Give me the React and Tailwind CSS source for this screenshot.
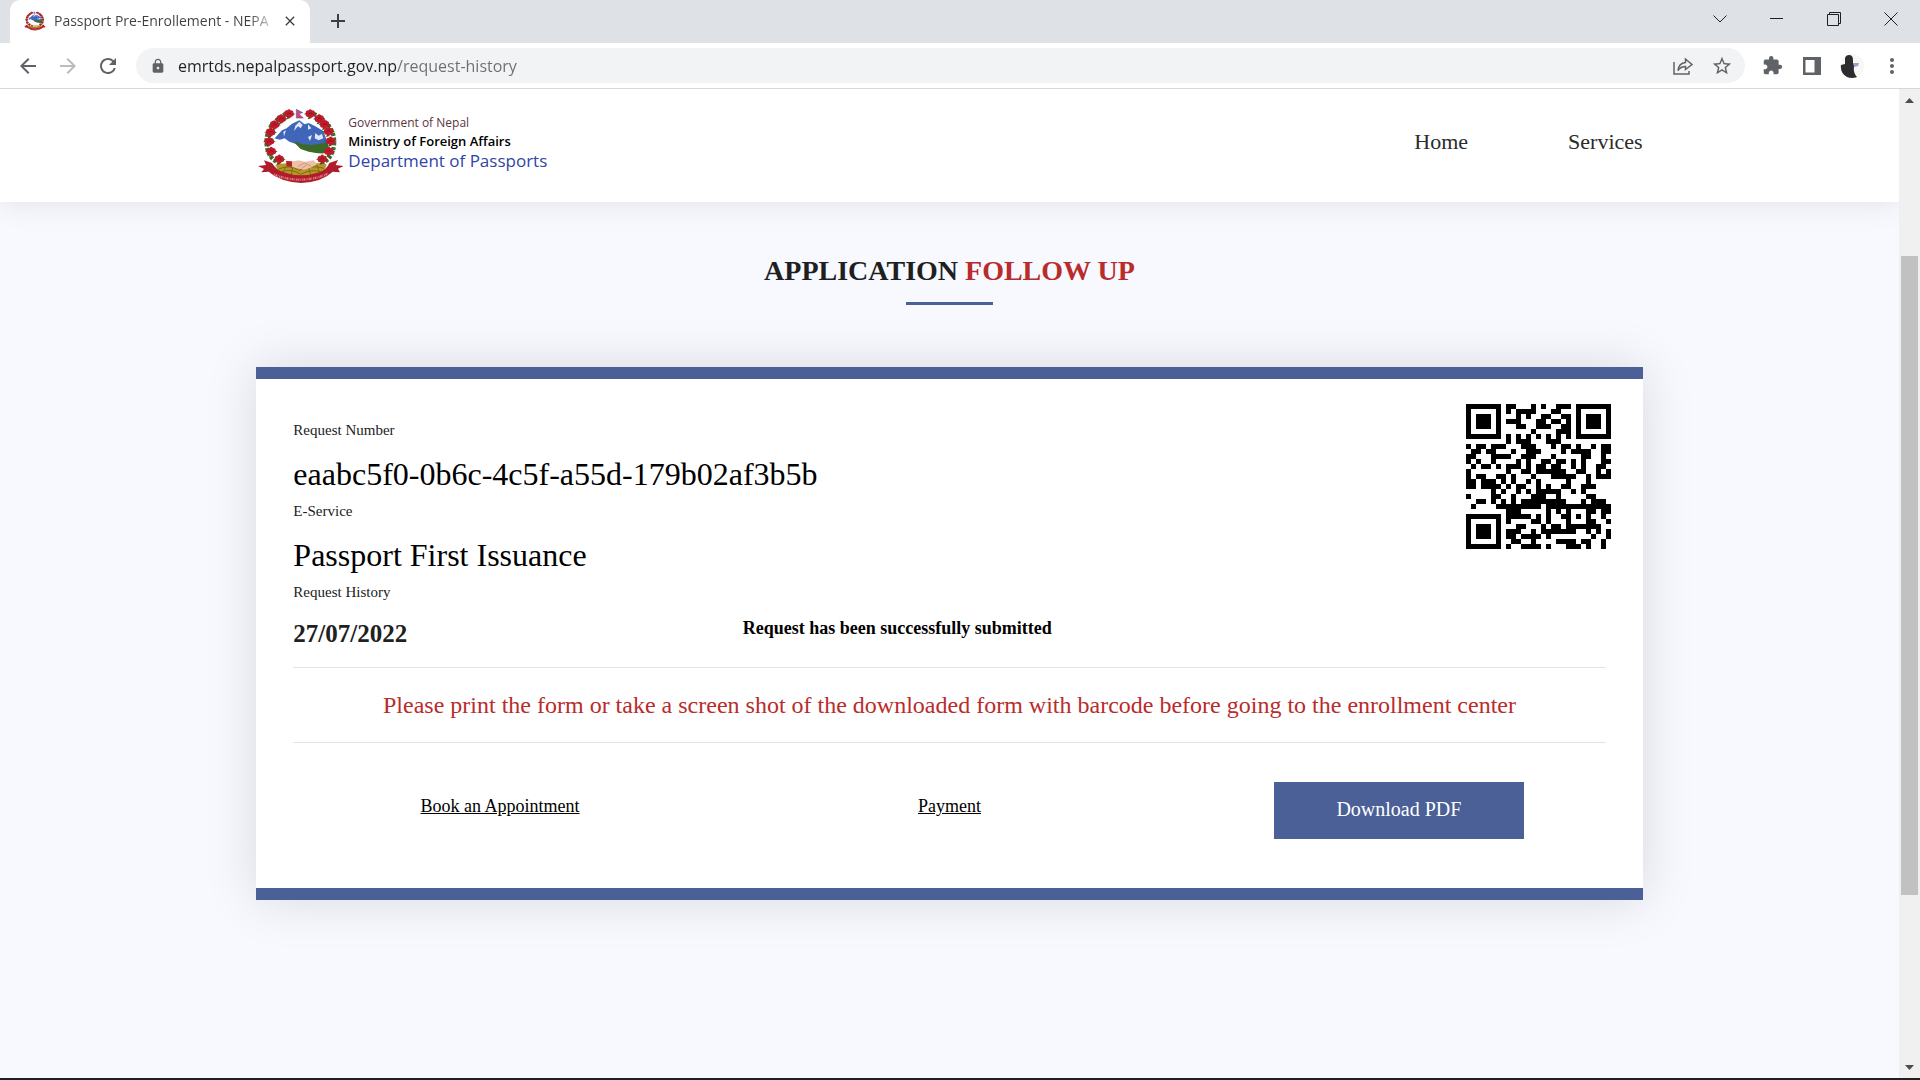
import React from "react";
import { MdAdd, MdArrowBack, MdArrowForward, MdClose, MdExtension, MdLock, MdMoreVert, MdRefresh, MdStarBorder } from "react-icons/md";

const REQUEST_NUMBER = "eaabc5f0-0b6c-4c5f-a55d-179b02af3b5b";

/* Version 3 QR symbol, error correction level M, mask 3. */
function qrModules(text) {
  const N = 29;
  const dataLen = 44;
  const ecLen = 26;
  const mul = (x, y) => {
    let z = 0;
    for (let i = 7; i >= 0; i--) {
      z = (z << 1) ^ ((z >> 7) * 0x11d);
      z ^= ((y >> i) & 1) * x;
    }
    return z;
  };
  const bits = [];
  const put = (v, n) => {
    for (let i = n - 1; i >= 0; i--) bits.push((v >> i) & 1);
  };
  put(4, 4);
  put(text.length, 8);
  Array.from(text, (c) => put(c.charCodeAt(0), 8));
  put(0, 4);
  const data = [];
  for (let i = 0; i < bits.length; i += 8) data.push(parseInt(bits.slice(i, i + 8).join(""), 2));
  for (let pad = 0xec; data.length < dataLen; pad ^= 0xec ^ 0x11) data.push(pad);

  const gen = Array(ecLen).fill(0);
  gen[ecLen - 1] = 1;
  let root = 1;
  for (let i = 0; i < ecLen; i++) {
    for (let j = 0; j < ecLen; j++) {
      gen[j] = mul(gen[j], root);
      if (j + 1 < ecLen) gen[j] ^= gen[j + 1];
    }
    root = mul(root, 2);
  }
  const rem = Array(ecLen).fill(0);
  data.forEach((byte) => {
    const f = byte ^ rem.shift();
    rem.push(0);
    gen.forEach((g, i) => (rem[i] ^= mul(g, f)));
  });
  const code = data.concat(rem);

  const m = Array.from({ length: N }, () => Array(N).fill(0));
  const fixed = Array.from({ length: N }, () => Array(N).fill(false));
  const set = (x, y, v) => {
    if (x < 0 || y < 0 || x >= N || y >= N) return;
    m[y][x] = v ? 1 : 0;
    fixed[y][x] = true;
  };
  for (let i = 0; i < N; i++) {
    set(6, i, i % 2 === 0);
    set(i, 6, i % 2 === 0);
  }
  const square = (cx, cy, r, light) => {
    for (let dy = -r; dy <= r; dy++)
      for (let dx = -r; dx <= r; dx++) set(cx + dx, cy + dy, !light.includes(Math.max(Math.abs(dx), Math.abs(dy))));
  };
  square(3, 3, 4, [2, 4]);
  square(N - 4, 3, 4, [2, 4]);
  square(3, N - 4, 4, [2, 4]);
  square(22, 22, 2, [1]);

  const format = 0b101101101001011;
  const fb = (i) => (format >> i) & 1;
  for (let i = 0; i <= 5; i++) set(8, i, fb(i));
  set(8, 7, fb(6));
  set(8, 8, fb(7));
  set(7, 8, fb(8));
  for (let i = 9; i < 15; i++) set(14 - i, 8, fb(i));
  for (let i = 0; i < 8; i++) set(N - 1 - i, 8, fb(i));
  for (let i = 8; i < 15; i++) set(8, N - 15 + i, fb(i));
  set(8, N - 8, 1);

  let k = 0;
  for (let right = N - 1; right >= 1; right -= 2) {
    if (right === 6) right = 5;
    for (let v = 0; v < N; v++)
      for (let j = 0; j < 2; j++) {
        const x = right - j;
        const y = ((right + 1) & 2) === 0 ? N - 1 - v : v;
        if (fixed[y][x]) continue;
        const bit = k < code.length * 8 ? (code[k >> 3] >> (7 - (k & 7))) & 1 : 0;
        k++;
        m[y][x] = (x + y) % 3 === 0 ? bit ^ 1 : bit;
      }
  }
  return m;
}

function QrCode({ value, className }) {
  const d = qrModules(value)
    .flatMap((row, y) => row.map((v, x) => (v ? `M${x} ${y}h1v1h-1z` : "")))
    .join("");
  return (
    <svg role="img" aria-label="QR code of the request" className={className} viewBox="0 0 29 29" shapeRendering="crispEdges">
      <path d={d} />
    </svg>
  );
}

const FLOWERS = [
  [93, 13], [157, 13], [70, 28], [184, 28], [50, 46], [200, 45], [38, 68], [212, 66],
  [34, 96], [218, 95], [40, 126], [213, 126], [64, 149], [193, 149],
];

function Emblem({ className }) {
  return (
    <svg className={className} viewBox="0 0 258 222" aria-hidden="true">
      <path d="M84 14Q20 50 26 108Q30 150 70 166M166 14Q234 50 228 108Q224 150 186 166" fill="none" stroke="#3f6b2c" strokeWidth="13" strokeDasharray="9 5" />
      <path d="M46 92L72 64L86 58L102 44L124 34L140 46L152 42L172 52L196 66L210 104L190 120L60 116Z" fill="#3f66b8" />
      <path d="M124 38L134 48L128 58L120 52L108 66L112 50ZM150 46L160 58L150 62ZM76 68L84 64L78 82ZM172 72L182 80L192 74L196 88L182 94L170 88ZM150 84L162 78L156 96Z" fill="#dfe8f8" />
      <path d="M100 104L116 98L132 106L160 108L186 104L210 100L212 132L150 136L110 118Z" fill="#3b6a28" />
      <path d="M48 88L66 92L80 88L94 98L112 104L128 120L152 128L188 134L192 154L182 170L76 170L56 150L44 118Z" fill="#fff" />
      <path d="M52 168Q86 158 118 168Q160 156 206 166L196 196Q130 216 66 194Z" fill="#b8972a" />
      <path d="M62 180Q94 166 124 184Q160 166 198 178M66 190Q100 176 128 196Q160 178 194 190M84 172L74 194M104 170L100 198M150 170L158 198M176 168L186 192" fill="none" stroke="#7d6b14" strokeWidth="3" />
      <path d="M98 158L122 154L142 158L166 154L178 164L158 176L138 182L116 178L98 172Z" fill="#efc0a8" />
      <path d="M120 172L140 162L160 172M130 178L146 168" fill="none" stroke="#b97c63" strokeWidth="2" />
      <path d="M84 156L102 157L102 173L86 172Z" fill="#b3202a" />
      <path d="M0 171L24 168L18 154L42 162Q54 182 76 190Q130 208 184 190Q206 182 214 162L240 153L233 168L257 171L240 179L246 190L224 188Q194 218 130 222Q66 218 32 188L10 190L18 180Z" fill="#b01c2c" />
      <path d="M48 196Q84 212 130 212Q176 210 210 194" fill="none" stroke="#e9a9a4" strokeWidth="7" strokeDasharray="3 2 5 2 2 3" opacity="0.7" />
      <path d="M115 1L134 11L122 14L136 27L115 27Z" fill="#d6436a" stroke="#5a5aa8" strokeWidth="2" />
      {FLOWERS.map(([x, y]) => (
        <g key={`${x}-${y}`}>
          <path d={`M${x - 19} ${y + 3}l11 -8l3 9zM${x + 19} ${y + 3}l-11 -8l-3 9zM${x - 8} ${y + 18}l4 -10l7 7z`} fill="#2f5a22" />
          <path d={`M${x - 14} ${y}q0 -10 9 -9q4 -7 10 0q9 0 8 9q4 8 -5 10q-7 7 -13 1q-10 1 -9 -11z`} fill="#c01a2b" />
          <path d={`M${x - 6} ${y + 3}q6 -9 12 -1`} fill="none" stroke="#8c1220" strokeWidth="3" />
        </g>
      ))}
    </svg>
  );
}

function BrowserChrome() {
  return (
    <header className="shrink-0 border-b border-[#d5d7da] bg-white font-['Open_Sans','Noto_Sans',sans-serif]">
      <div className="flex h-[43px] items-stretch bg-[#dee1e6] pl-2.5">
        <div className="flex w-[300px] items-center rounded-t-[10px] bg-white pr-3 pb-0.5 pl-3.5">
          <Emblem className="h-5 w-[22px] shrink-0" />
          <div className="ml-2 w-[220px] bg-[linear-gradient(to_right,#3c4043_195px,transparent_224px)] bg-clip-text text-sm whitespace-nowrap text-transparent">
            Passport Pre-Enrollement - NEPA
          </div>
          <button type="button" aria-label="Close tab" className="ml-2 flex size-4 items-center justify-center text-[#3c4043]">
            <MdClose className="size-4 shrink-0" stroke="currentColor" />
          </button>
        </div>
        <button type="button" aria-label="New tab" className="ml-4 flex w-6 items-center justify-center pb-0.5 text-[#3c4043]">
          <MdAdd className="size-6 shrink-0" />
        </button>
        <div className="ml-auto flex items-start pt-3 text-[#1f1f1f]">
          <button type="button" aria-label="Search tabs" className="flex w-[57px] justify-center">
            <svg className="size-[14px]" viewBox="0 0 14 14" fill="none" stroke="currentColor"><path d="M0.5 3.5L7 10L13.5 3.5" /></svg>
          </button>
          <button type="button" aria-label="Minimize" className="flex w-[57px] justify-center">
            <svg className="size-[14px]" viewBox="0 0 14 14" stroke="currentColor"><path d="M0 6.5H13" /></svg>
          </button>
          <button type="button" aria-label="Restore" className="flex w-[57px] justify-center">
            <svg className="size-[14px]" viewBox="0 0 14 14" fill="none" stroke="currentColor"><path d="M0.5 2.5H11.5V13.5H0.5ZM2.5 2.5V0.5H13.5V11.5H11.5" /></svg>
          </button>
          <button type="button" aria-label="Close" className="flex w-[58px] justify-center">
            <svg className="size-[14px]" viewBox="0 0 14 14" stroke="currentColor"><path d="M0.5 0.5L13.5 13.5M13.5 0.5L0.5 13.5" /></svg>
          </button>
        </div>
      </div>
      <div className="flex h-[45px] items-center px-4 text-[#5f6368]">
        <button type="button" aria-label="Back"><MdArrowBack className="size-6" /></button>
        <button type="button" aria-label="Forward" className="ml-4 text-[#babcbe]"><MdArrowForward className="size-6" /></button>
        <button type="button" aria-label="Reload" className="ml-4"><MdRefresh className="size-6" /></button>
        <div className="ml-4 flex h-[35px] flex-1 items-center rounded-full bg-[#f1f3f4] pr-3 pl-3.5">
          <MdLock className="size-4 shrink-0" />
          <input
            aria-label="Address"
            readOnly
            value="emrtds.nepalpassport.gov.np/request-history"
            className="ml-3 h-6 min-w-0 flex-1 bg-[linear-gradient(to_right,#202124_219px,#6b6e72_219px)] bg-clip-text text-base text-transparent outline-none"
          />
          <button type="button" aria-label="Share" className="mr-[17px]">
            <svg className="size-[22px]" viewBox="0 0 22 22" fill="none" stroke="currentColor" strokeWidth="1.5">
              <path d="M2 7V19H17V16M6 15.500C6.500 10.500 9 8 13.500 7.500V4L20 9.500L13.500 14.500V11.500C10.500 11.500 8 12.500 6 15.500Z" />
            </svg>
          </button>
          <button type="button" aria-label="Bookmark"><MdStarBorder className="size-[22px]" /></button>
        </div>
        <button type="button" aria-label="Extensions" className="ml-[17px]"><MdExtension className="size-[21px]" /></button>
        <button type="button" aria-label="Side panel" className="ml-5">
          <svg className="size-[18px]" viewBox="0 0 18 18" fill="currentColor"><path fillRule="evenodd" d="M0 0H18V18H0ZM2.500 3V15.500H11.500V3Z" /></svg>
        </button>
        <button type="button" aria-label="Profile" className="ml-[19px]">
          <svg className="size-6" viewBox="0 0 24 24">
            <circle cx="12" cy="12" r="12" fill="#f7f7f5" />
            <path d="M5 4Q6 1 9 1Q13 1 13 6L13 9L16 10L14 13Q13 19 17 23Q12 25 7 23Q0 19 1 11L5 10Z" fill="#2c2c2e" />
            <path d="M13 9L19 9L18 12L14 13Z" fill="#97a3cf" />
          </svg>
        </button>
        <button type="button" aria-label="Menu" className="ml-4"><MdMoreVert className="size-6" /></button>
      </div>
    </header>
  );
}

function Scrollbar() {
  return (
    <div aria-hidden="true" className="flex w-[21px] shrink-0 flex-col bg-[#f0f0f0] px-0.5 text-[#4d4d4d]">
      <div className="flex h-[23px] items-center justify-center">
        <svg className="h-[5px] w-[9px]" viewBox="0 0 9 5" fill="currentColor"><path d="M0 5L4.500 0L9 5Z" /></svg>
      </div>
      <div className="flex-[144]" />
      <div className="flex-[639] bg-[#c1c1c1]" />
      <div className="flex-[162]" />
      <div className="flex h-[21px] items-center justify-center">
        <svg className="h-[5px] w-[9px]" viewBox="0 0 9 5" fill="currentColor"><path d="M0 0L4.500 5L9 0Z" /></svg>
      </div>
    </div>
  );
}

function Detail({ label, value }) {
  return (
    <div>
      <dt className="mb-3 text-[15px] leading-6 text-[#212121]">{label}</dt>
      <dd className="mb-[5px] text-[32px] leading-10">{value}</dd>
    </div>
  );
}

function SiteHeader() {
  return (
    <div className="relative bg-white shadow-[0_0_30px_rgba(0,0,0,0.1)]">
      <div className="mx-auto flex h-[113px] w-[73%] items-center justify-between">
        <a href="#home" className="flex items-center gap-1 pl-0.5 font-['Open_Sans','Noto_Sans',sans-serif]">
          <Emblem className="h-[74px] w-[86px]" />
          <span className="flex flex-col pb-1.5">
            <span className="text-xs leading-[18px] text-[#5a3640]">Government of Nepal</span>
            <span className="text-[13px] leading-[18px] font-semibold text-black">Ministry of Foreign Affairs</span>
            <span className="text-[17px] leading-[22px] font-medium text-[#2f45a5]">Department of Passports</span>
          </span>
        </a>
        <nav className="flex gap-[100px] pb-2 text-[22px] text-[#2b2b2b]">
          <a href="#home">Home</a>
          <a href="#services">Services</a>
        </nav>
      </div>
    </div>
  );
}

function RequestCard() {
  return (
    <section className="mx-auto mt-[62px] w-[73%] border-y-12 border-[#4a6097] bg-white px-[37px] pb-[49px] shadow-[0_0_50px_rgba(0,0,0,0.13)]">
      <div className="flex items-start justify-between pt-[25px]">
        <dl className="pt-3.5">
          <Detail label="Request Number" value={REQUEST_NUMBER} />
          <Detail label="E-Service" value="Passport First Issuance" />
        </dl>
        <QrCode value={REQUEST_NUMBER} className="-mr-[5px] size-[145px]" />
      </div>
      <h2 className="mb-3 text-[15px] leading-6 text-[#212121]">Request History</h2>
      <div className="grid grid-cols-3 items-start gap-9">
        <p className="text-[25px] leading-9 font-bold text-[#212121]">27/07/2022</p>
        <p className="text-lg leading-6 font-bold whitespace-nowrap">Request has been successfully submitted</p>
      </div>
      <p className="mt-[15px] border-y border-[#e3e3e3] py-5 text-center text-2xl leading-[34px] text-[#b92c2c]">
        Please print the form or take a screen shot of the downloaded form with barcode before going to the enrollment center
      </p>
      <div className="mt-[39px] grid grid-cols-3 items-start gap-9 text-center text-lg leading-6">
        <a href="#appointment" className="pt-3 underline">Book an Appointment</a>
        <a href="#payment" className="pt-3 underline">Payment</a>
        <button type="button" className="h-[57px] w-[250px] justify-self-center bg-[#4a6097] pb-1 text-xl text-white">Download PDF</button>
      </div>
    </section>
  );
}

export default function App() {
  return (
    <div className="flex h-screen flex-col">
      <BrowserChrome />
      <div className="flex min-h-0 flex-1">
        <main className="min-w-0 flex-1 overflow-hidden bg-[#f8f9ff] font-['Liberation_Serif',serif] text-black">
          <SiteHeader />
          <h1 className="mt-[49px] text-center text-[28px] leading-10 font-bold text-[#1f1f1f]">
            APPLICATION <span className="text-[#b92c2c]">FOLLOW UP</span>
          </h1>
          <div className="mx-auto mt-[11px] h-[3px] w-[87px] bg-[#4a6097]" />
          <RequestCard />
        </main>
        <Scrollbar />
      </div>
      <div className="h-[2px] shrink-0 bg-[#231f20]" />
    </div>
  );
}
